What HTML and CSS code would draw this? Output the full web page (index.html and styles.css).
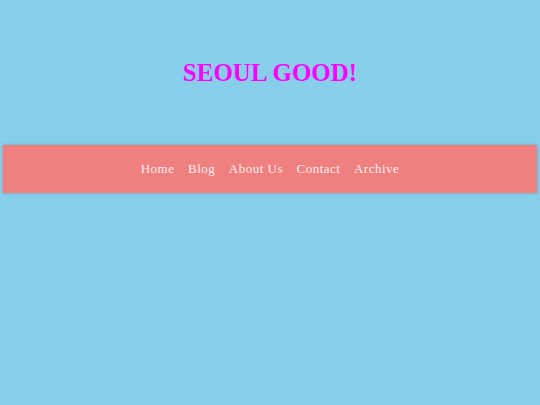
FILE: index.html
```html
<!DOCTYPE html>
<html>
<head>
<meta charset="utf-8">
<link rel="stylesheet" href="styles.css">
</head>
<body>
<header class="header">
  <h1 class="title">SEOUL GOOD!</h1>
</header>
<nav class="nav">
  <a class="nav-link" href="#">Home</a>
  <a class="nav-link" href="#">Blog</a>
  <a class="nav-link" href="#">About Us</a>
  <a class="nav-link" href="#">Contact</a>
  <a class="nav-link" href="#">Archive</a>
</nav>
</body>
</html>
```
FILE: styles.css
```css
html, body {
  margin: 0;
  padding: 0;
}
body {
  background: #87ceeb;
  font-family: "Liberation Serif", serif;
  height: 405px;
}
.header {
  padding-top: 55px;
  height: 90px;
  box-sizing: border-box;
}
.title {
  margin: 0;
  text-align: center;
  color: #ff00ff;
  font-size: 25px;
  font-weight: bold;
  line-height: 36px;
}
.nav {
  margin: 55px 3px 0;
  height: 48px;
  background: #f08080;
  box-shadow: 0 0 3px rgba(120, 120, 120, 0.6);
  display: flex;
  justify-content: center;
  align-items: center;
  gap: 13.5px;
}
.nav-link {
  color: #fdeeee;
  text-decoration: none;
  font-size: 13px;
  letter-spacing: 0.5px;
}
```
